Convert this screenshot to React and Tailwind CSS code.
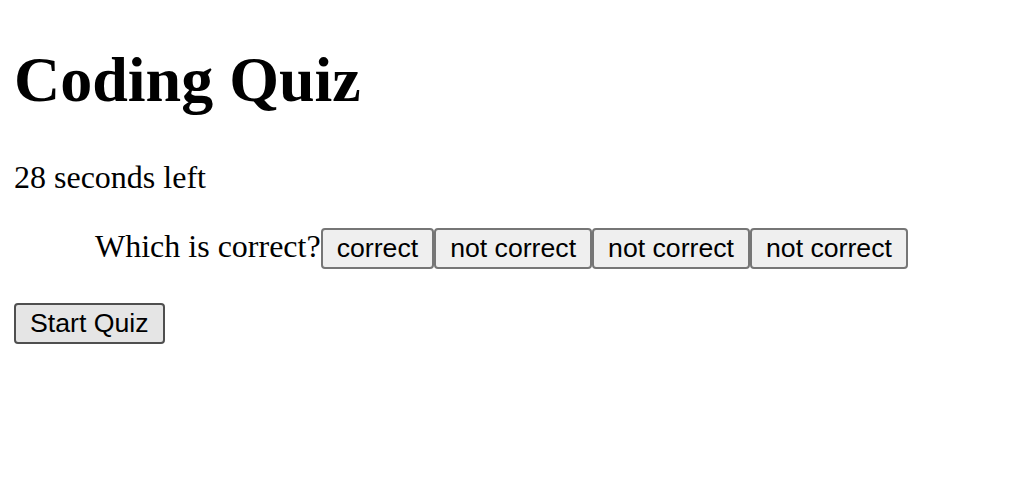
export default function App() {
  const btn =
    "inline-block align-baseline bg-[#efefef] border-2 border-[#767676] rounded-[4px] px-[14px] py-[4px] text-[26.667px] leading-[29px] text-black";
  return (
    <div
      className="px-[14px] pt-[43px] pb-[16px] bg-white text-black min-h-[499px]"
      style={{ fontFamily: '"Liberation Serif", "Times New Roman", serif' }}
    >
      <h1 className="text-[64px] font-bold leading-[74px] m-0">Coding Quiz</h1>
      <p className="mt-[42px] text-[32px] leading-[37px]">28 seconds left</p>
      <div className="mt-[32px] pl-[81px] text-[32px] leading-[37px]">
        <span>Which is correct?</span>
        <span style={{ fontFamily: '"Liberation Sans", Arial, sans-serif' }}>
          <button className={btn}>correct</button>
          <button className={btn}>not correct</button>
          <button className={btn}>not correct</button>
          <button className={btn}>not correct</button>
        </span>
      </div>
      <div className="mt-[34px]" style={{ fontFamily: '"Liberation Sans", Arial, sans-serif' }}>
        <button className="inline-block bg-[#e5e5e5] border-2 border-[#4f4f4f] rounded-[4px] px-[14px] py-[4px] text-[26.667px] leading-[29px] text-black">
          Start Quiz
        </button>
      </div>
    </div>
  );
}
